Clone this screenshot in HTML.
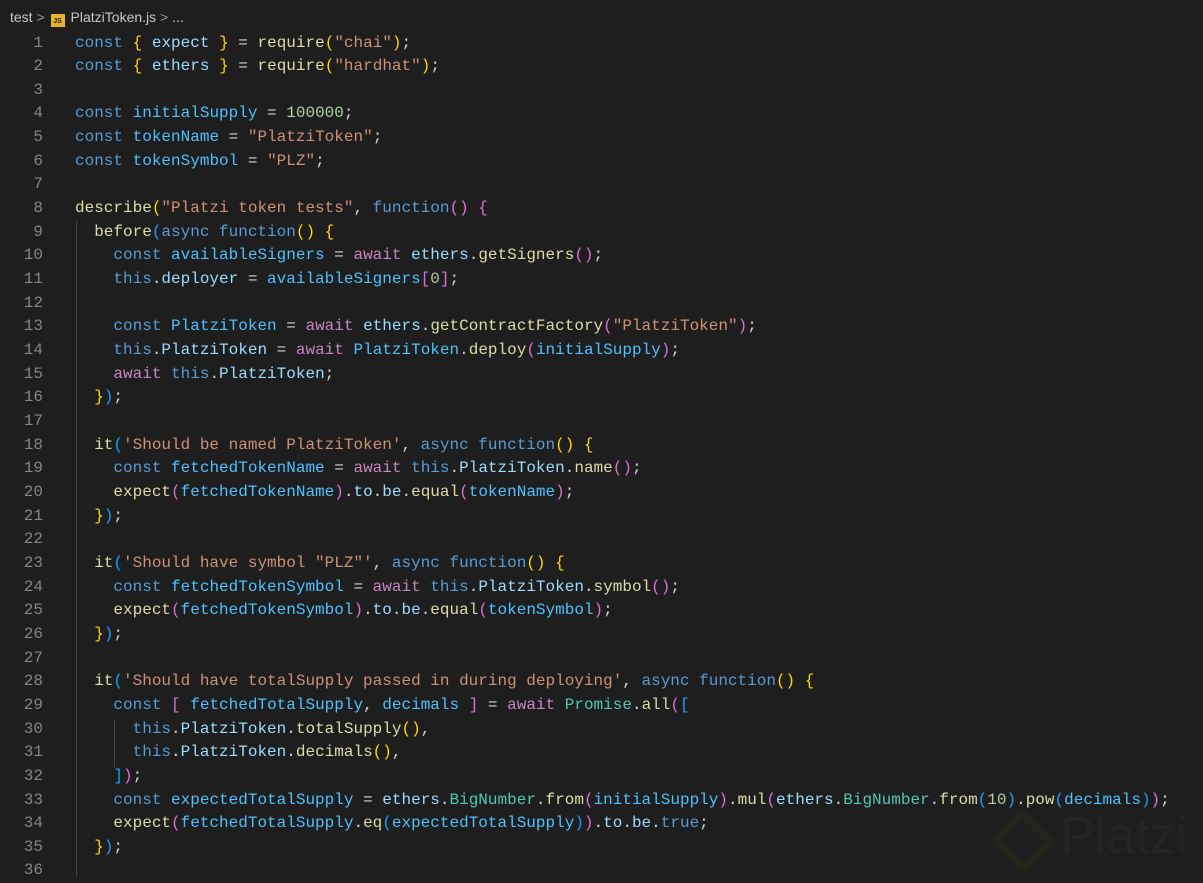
<!DOCTYPE html>
<html><head><meta charset="utf-8"><style>
html,body{margin:0;padding:0;background:#1e1e1e;width:1203px;height:877px;overflow:hidden}
.bc{position:absolute;left:10px;top:9px;font:14px "Liberation Sans",sans-serif;color:#c8c8c8;white-space:nowrap}
.js{display:inline-block;width:14px;height:13px;background:#e8b32c;color:#1e1e1e;font:bold 7px "Liberation Sans",sans-serif;text-align:center;line-height:16px;vertical-align:-1px;margin:0 6px 0 2px}
.ln{position:absolute;left:0;top:31.5px;width:43px;text-align:right;font:16px/23.66px "Liberation Mono",monospace;color:#858585;margin:0}
.code{position:absolute;left:75px;top:31.5px;font:16px/23.66px "Liberation Mono",monospace;color:#d4d4d4;margin:0;white-space:pre}
.g{position:absolute;width:1px;background:#444}
.k{color:#569cd6}.v{color:#9cdcfe}.f{color:#dcdcaa}.s{color:#ce9178}.n{color:#b5cea8}.c{color:#4fc1ff}.a{color:#c586c0}.y{color:#ffd700}.p{color:#da70d6}.b{color:#179fff}.t{color:#4ec9b0}
.wm{position:absolute;left:1060px;top:806px;font:52px "Liberation Sans",sans-serif;color:#242424}
.logo{position:absolute;left:1000px;top:818px;width:30px;height:30px;border:8px solid #22251c;transform:rotate(45deg);border-radius:6px}
</style></head><body>
<div class="bc">test <span style="color:#999">&gt;</span> <span class="js">JS</span>PlatziToken.js <span style="color:#999">&gt;</span> ...</div>
<pre class="ln">1
2
3
4
5
6
7
8
9
10
11
12
13
14
15
16
17
18
19
20
21
22
23
24
25
26
27
28
29
30
31
32
33
34
35
36</pre>
<div class="g" style="left:76px;top:221px;height:656px"></div>
<div class="g" style="left:114px;top:719px;height:48px"></div>
<div class="logo"></div>
<div class="wm">Platzi</div>
<pre class="code"><span class="k">const</span> <span class="y">{</span> <span class="v">expect</span> <span class="y">}</span> = <span class="f">require</span><span class="y">(</span><span class="s">"chai"</span><span class="y">)</span>;
<span class="k">const</span> <span class="y">{</span> <span class="v">ethers</span> <span class="y">}</span> = <span class="f">require</span><span class="y">(</span><span class="s">"hardhat"</span><span class="y">)</span>;

<span class="k">const</span> <span class="c">initialSupply</span> = <span class="n">100000</span>;
<span class="k">const</span> <span class="c">tokenName</span> = <span class="s">"PlatziToken"</span>;
<span class="k">const</span> <span class="c">tokenSymbol</span> = <span class="s">"PLZ"</span>;

<span class="f">describe</span><span class="y">(</span><span class="s">"Platzi token tests"</span>, <span class="k">function</span><span class="p">()</span> <span class="p">{</span>
  <span class="f">before</span><span class="b">(</span><span class="k">async</span> <span class="k">function</span><span class="y">()</span> <span class="y">{</span>
    <span class="k">const</span> <span class="c">availableSigners</span> = <span class="a">await</span> <span class="v">ethers</span>.<span class="f">getSigners</span><span class="p">()</span>;
    <span class="k">this</span>.<span class="v">deployer</span> = <span class="c">availableSigners</span><span class="p">[</span><span class="n">0</span><span class="p">]</span>;

    <span class="k">const</span> <span class="c">PlatziToken</span> = <span class="a">await</span> <span class="v">ethers</span>.<span class="f">getContractFactory</span><span class="p">(</span><span class="s">"PlatziToken"</span><span class="p">)</span>;
    <span class="k">this</span>.<span class="v">PlatziToken</span> = <span class="a">await</span> <span class="c">PlatziToken</span>.<span class="f">deploy</span><span class="p">(</span><span class="c">initialSupply</span><span class="p">)</span>;
    <span class="a">await</span> <span class="k">this</span>.<span class="v">PlatziToken</span>;
  <span class="y">}</span><span class="b">)</span>;

  <span class="f">it</span><span class="b">(</span><span class="s">'Should be named PlatziToken'</span>, <span class="k">async</span> <span class="k">function</span><span class="y">()</span> <span class="y">{</span>
    <span class="k">const</span> <span class="c">fetchedTokenName</span> = <span class="a">await</span> <span class="k">this</span>.<span class="v">PlatziToken</span>.<span class="f">name</span><span class="p">()</span>;
    <span class="f">expect</span><span class="p">(</span><span class="c">fetchedTokenName</span><span class="p">)</span>.<span class="v">to</span>.<span class="v">be</span>.<span class="f">equal</span><span class="p">(</span><span class="c">tokenName</span><span class="p">)</span>;
  <span class="y">}</span><span class="b">)</span>;

  <span class="f">it</span><span class="b">(</span><span class="s">'Should have symbol "PLZ"'</span>, <span class="k">async</span> <span class="k">function</span><span class="y">()</span> <span class="y">{</span>
    <span class="k">const</span> <span class="c">fetchedTokenSymbol</span> = <span class="a">await</span> <span class="k">this</span>.<span class="v">PlatziToken</span>.<span class="f">symbol</span><span class="p">()</span>;
    <span class="f">expect</span><span class="p">(</span><span class="c">fetchedTokenSymbol</span><span class="p">)</span>.<span class="v">to</span>.<span class="v">be</span>.<span class="f">equal</span><span class="p">(</span><span class="c">tokenSymbol</span><span class="p">)</span>;
  <span class="y">}</span><span class="b">)</span>;

  <span class="f">it</span><span class="b">(</span><span class="s">'Should have totalSupply passed in during deploying'</span>, <span class="k">async</span> <span class="k">function</span><span class="y">()</span> <span class="y">{</span>
    <span class="k">const</span> <span class="p">[</span> <span class="c">fetchedTotalSupply</span>, <span class="c">decimals</span> <span class="p">]</span> = <span class="a">await</span> <span class="t">Promise</span>.<span class="f">all</span><span class="p">(</span><span class="b">[</span>
      <span class="k">this</span>.<span class="v">PlatziToken</span>.<span class="f">totalSupply</span><span class="y">()</span>,
      <span class="k">this</span>.<span class="v">PlatziToken</span>.<span class="f">decimals</span><span class="y">()</span>,
    <span class="b">]</span><span class="p">)</span>;
    <span class="k">const</span> <span class="c">expectedTotalSupply</span> = <span class="v">ethers</span>.<span class="t">BigNumber</span>.<span class="f">from</span><span class="p">(</span><span class="c">initialSupply</span><span class="p">)</span>.<span class="f">mul</span><span class="p">(</span><span class="v">ethers</span>.<span class="t">BigNumber</span>.<span class="f">from</span><span class="b">(</span><span class="n">10</span><span class="b">)</span>.<span class="f">pow</span><span class="b">(</span><span class="c">decimals</span><span class="b">)</span><span class="p">)</span>;
    <span class="f">expect</span><span class="p">(</span><span class="c">fetchedTotalSupply</span>.<span class="f">eq</span><span class="b">(</span><span class="c">expectedTotalSupply</span><span class="b">)</span><span class="p">)</span>.<span class="v">to</span>.<span class="v">be</span>.<span class="k">true</span>;
  <span class="y">}</span><span class="b">)</span>;
</pre>
</body></html>
